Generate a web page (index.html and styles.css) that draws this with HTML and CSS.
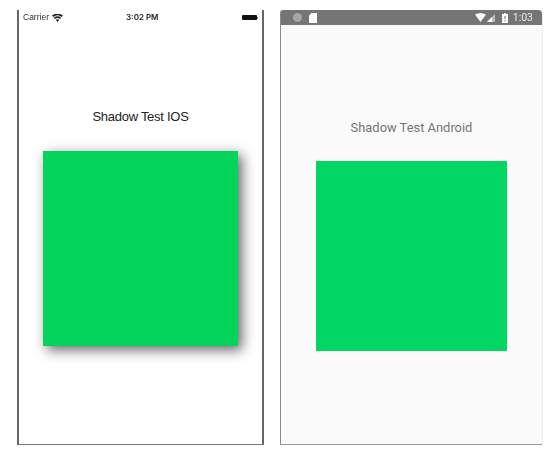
FILE: index.html
```html
<!DOCTYPE html>
<html lang="en">
<head>
<meta charset="utf-8">
<title>Shadow Test</title>
<link rel="stylesheet" href="styles.css">
</head>
<body>
<main class="stage">
  <section class="phone ios">
    <div class="ios-status">
      <div class="ios-left">
        <span>Carrier</span>
        <svg class="ios-wifi" width="11" height="8" viewBox="0 0 11 8"><path d="M5.5 8 3.7 5.8a3 3 0 0 1 3.6 0zM2.9 4.9 1.9 3.7a6 6 0 0 1 7.2 0l-1 1.2a4.4 4.4 0 0 0-5.2 0zM1.2 2.9 0 1.6a9 9 0 0 1 11 0L9.8 2.9a7.3 7.3 0 0 0-8.6 0z" fill="#222"/></svg>
      </div>
      <span class="ios-time">3:02 PM</span>
      <div class="ios-battery"><span class="ios-battery-body"></span><span class="ios-battery-cap"></span></div>
    </div>
    <h1 class="ios-title">Shadow Test IOS</h1>
    <div class="ios-box"></div>
  </section>
  <section class="phone android">
    <div class="android-status">
      <div class="android-left">
        <span class="android-dot"></span>
        <svg width="8" height="10" viewBox="0 0 8 10"><path d="M2.5 0H8v10H0V2.5z" fill="#fafafa"/></svg>
      </div>
      <div class="android-right">
        <svg width="11" height="9" viewBox="0 0 11 9"><path d="M0 1.5Q5.500-1.500 11 1.500L5.500 9z" fill="#fafafa"/></svg>
        <svg class="android-signal" width="8" height="8" viewBox="0 0 8 8"><path d="M8 0V8H0z" fill="#bdbdbd"/><path d="M5 3V8H0z" fill="#fafafa"/></svg>
        <svg class="android-batt" width="6" height="10" viewBox="0 0 6 10"><path d="M2 0H4V1H6V10H0V1H2z" fill="#fafafa"/><path d="M2.500 3H3.500V6H2.500zM2.500 7H3.500V8H2.500z" fill="#757575"/></svg>
        <span class="android-time">1:03</span>
      </div>
    </div>
    <h1 class="android-title">Shadow Test Android</h1>
    <div class="android-box"></div>
  </section>
</main>
</body>
</html>
```
FILE: styles.css
```css
* { box-sizing: border-box; }
html, body { margin: 0; padding: 0; background: #fff; }
body { width: 558px; height: 457px; overflow: hidden; }
.stage { display: flex; gap: 16px; padding: 10px 0 0 17px; align-items: flex-start; }
.phone { height: 435px; display: flex; flex-direction: column; align-items: center; }
.phone h1 { margin: 0; font-weight: 400; text-align: center; white-space: nowrap; }

.ios { width: 247px; background: #fff; border: solid #666; border-width: 0 2px 1px 2px; border-bottom-color: #777; }
.ios-status { width: 100%; height: 15px; display: flex; justify-content: space-between; align-items: center; padding: 0 4px 0 4px; font: 8.500px/15px "Liberation Sans", sans-serif; color: #333; position: relative; filter: blur(.25px); }
.ios-left { display: flex; align-items: center; gap: 3px; }
.ios-time { position: absolute; left: 107px; top: 0; font: 600 8px/15px Inter, sans-serif; color: #222; }
.ios-wifi { display: block; }
.ios-battery { display: flex; align-items: center; }
.ios-battery-body { width: 15px; height: 5px; background: #111; border-radius: 1px; }
.ios-battery-cap { width: 1px; height: 2px; background: #777; }
.ios-title { padding-top: 84px; height: 126px; margin-left: -1px; font: 13px/16px "Liberation Sans", sans-serif; letter-spacing: -.27px; color: #222; }
.ios-box { width: 195px; height: 195px; background: #04d35c; box-shadow: 4px 4px 12px rgba(0,0,0,.6); margin-left: -1px; }

.android { width: 262px; background: #fafafa; border: solid #8a8a8a; border-width: 0 0 1px 1px; border-radius: 3px 3px 0 0; border-bottom-color: #999; box-shadow: 1px 0 0 #efefef; }
.android-status { width: 100%; height: 15px; background: #757575; border-radius: 2px 4px 0 0; display: flex; justify-content: space-between; align-items: center; padding: 0 9px 0 12px; filter: blur(.25px); }
.android-left { display: flex; align-items: center; gap: 7px; }
.android-dot { width: 9px; height: 9px; border-radius: 50%; background: #a6a6a6; }
.android-right { display: flex; align-items: center; gap: 1px; }
.android-batt { margin: 0 4px 0 6px; }
.android-time { font: 10.500px/15px Roboto, sans-serif; color: #e8e8e8; }
.android-title { padding-top: 95px; height: 136px; font: 12.900px/16px Roboto, sans-serif; color: #757575; }
.android-box { width: 191px; height: 190px; background: #00d664; margin-left: -1px; }
```
